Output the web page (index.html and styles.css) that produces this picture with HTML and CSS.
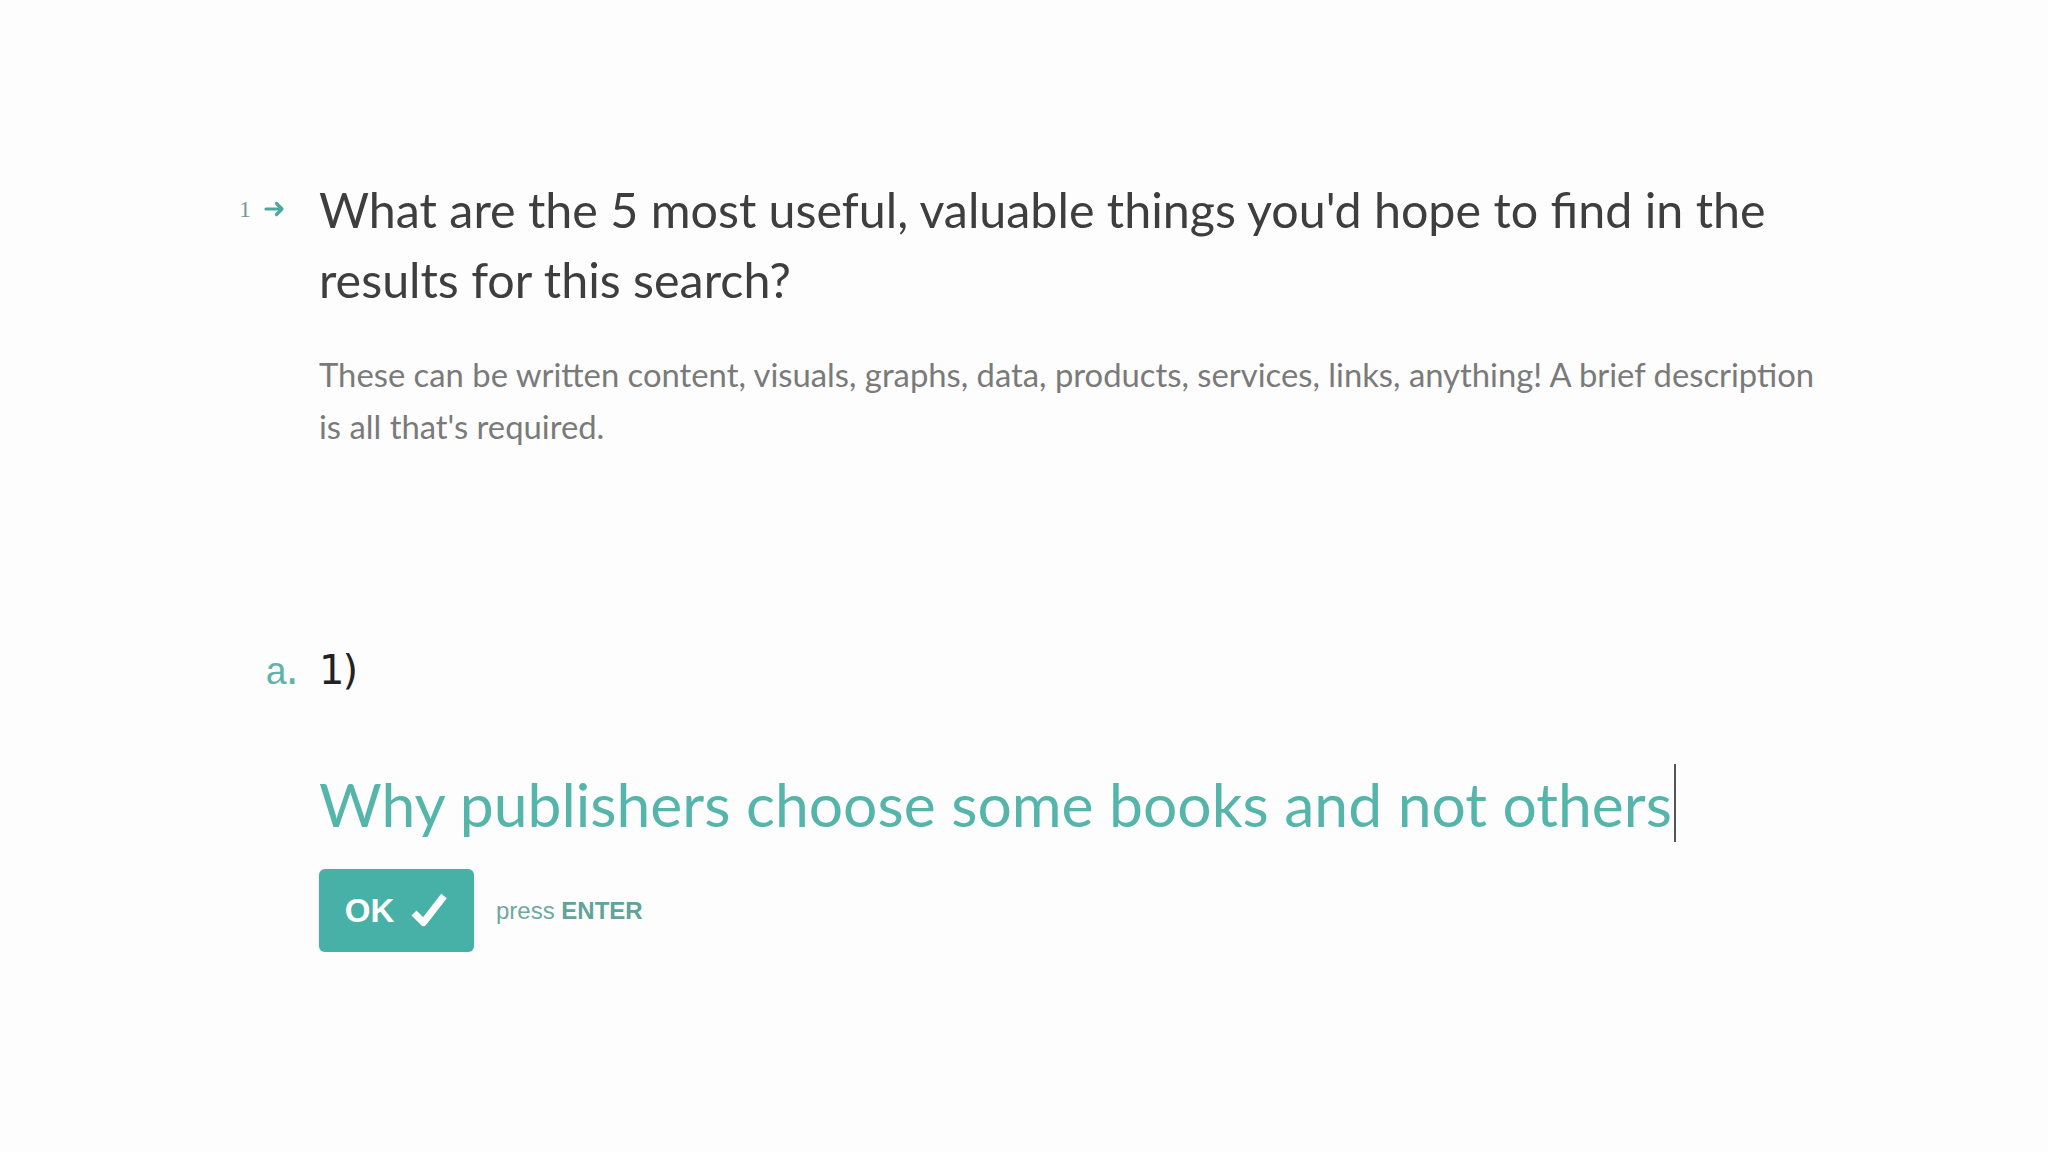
FILE: index.html
```html
<!DOCTYPE html>
<html lang="en">
<head>
<meta charset="utf-8">
<title>Question 1</title>
<link rel="stylesheet" href="styles.css">
</head>
<body>
<main class="form">
  <section class="question">
    <div class="q-index">
      <span class="q-num">1</span>
      <svg class="q-arrow" width="22" height="16" viewBox="0 0 22 16" aria-hidden="true"><path d="M2 8H18M12.5 2.5L18 8l-5.5 5.5" fill="none" stroke="#4aa89e" stroke-width="3.2" stroke-linecap="round" stroke-linejoin="round"/></svg>
    </div>
    <div class="q-body">
      <h1 class="q-title">What are the 5 most useful, valuable things you'd hope to find in the results for this search?</h1>
      <p class="q-desc">These can be written content, visuals, graphs, data, products, services, links, anything! A brief description is all that's required.</p>
    </div>
  </section>

  <section class="answer">
    <div class="a-row">
      <span class="a-letter">a.</span>
      <span class="a-label">1)</span>
    </div>
    <div class="a-input">
      <span class="a-text">Why publishers choose some books and not others</span><span class="caret"></span>
    </div>
    <div class="a-actions">
      <button class="ok-btn" type="button">OK
        <svg class="ok-check" width="38" height="36" viewBox="0 0 38 36" aria-hidden="true"><path d="M4 20l9.5 9.5L34 3" fill="none" stroke="#fff" stroke-width="7" stroke-linejoin="round"/></svg>
      </button>
      <span class="hint">press <b>ENTER</b></span>
    </div>
  </section>
</main>
</body>
</html>
```
FILE: styles.css
```css
html, body {
  margin: 0;
  padding: 0;
  background: #fdfdfd;
}
body {
  font-family: Lato, "Open Sans", sans-serif;
  color: #3d3d3d;
}
.form {
  padding: 174px 0 0 239px;
}
.question {
  display: flex;
  align-items: flex-start;
}
.q-index {
  width: 80px;
  flex: none;
  display: flex;
  align-items: center;
  gap: 13px;
  height: 70px;
  color: #7a9a97;
}
.q-num {
  font-family: "Liberation Serif", serif;
  font-size: 24px;
}
.q-body {
  width: 1505px;
}
.q-title {
  margin: 0;
  font-weight: 400;
  font-size: 48.4px;
  line-height: 70px;
  color: #3e3e3e;
}
.q-desc {
  margin: 35px 0 0;
  font-size: 32.8px;
  line-height: 52px;
  color: #7a7a7a;
}
.answer {
  margin-top: 194px;
}
.a-row {
  display: flex;
  align-items: baseline;
  height: 60px;
}
.a-letter {
  width: 80px;
  box-sizing: border-box;
  padding-left: 26px;
  font-family: "Liberation Mono", monospace;
  font-size: 38px;
  letter-spacing: -7px;
  color: #5fb3aa;
}
.a-label {
  font-family: "DejaVu Sans", sans-serif;
  font-size: 40px;
  letter-spacing: -2px;
  color: #222;
}
.a-input {
  margin: 56px 0 0 80px;
  display: flex;
  align-items: center;
  height: 80px;
}
.a-text {
  font-family: Lato, sans-serif;
  font-size: 60.6px;
  color: #55b5ab;
}
.caret {
  width: 2px;
  height: 78px;
  background: #555;
  margin-left: 2px;
}
.a-actions {
  margin: 26px 0 0 80px;
  display: flex;
  align-items: center;
  gap: 22px;
}
.ok-btn {
  width: 155px;
  height: 83px;
  border: none;
  border-radius: 6px;
  background: #48b1a7;
  color: #fff;
  font-family: "Liberation Sans", Arial, sans-serif;
  font-weight: 700;
  font-size: 33px;
  display: flex;
  align-items: center;
  justify-content: center;
  gap: 16px;
  padding: 0;
  box-shadow: 0 1px 3px rgba(0,0,0,0.12);
}
.hint {
  font-family: "Liberation Sans", Arial, sans-serif;
  font-size: 24px;
  color: #6fa8a2;
}
.hint b {
  font-weight: 700;
  color: #5fa39b;
}
```
